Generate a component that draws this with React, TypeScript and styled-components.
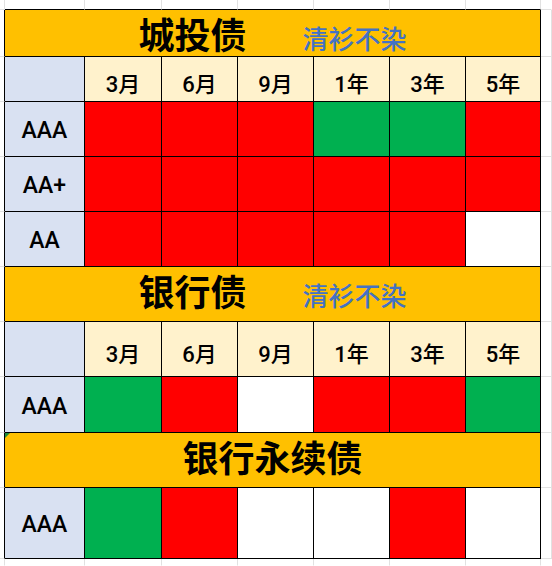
import React, { FC, ReactElement } from 'react'
import styled, { createGlobalStyle } from 'styled-components'

const GlobalStyle = createGlobalStyle`
  html, body {
    margin: 0;
    padding: 0;
    background: #ffffff;
  }
`

type Line = 'ink' | 'grid' | 'none'

const lineColor = (l?: Line) =>
    l === 'ink' ? '#000000' : l === 'grid' ? '#e1e1e1' : 'transparent'

const RED = '#ff0000'
const GREEN = '#00b050'
const WHITE = '#ffffff'

const Sheet = styled.div<{ $rows: string }>`
  display: grid;
  grid-template-columns: 5px 80px 77px 76px 76px 76px 76px 75px 1fr;
  grid-template-rows: ${props => props.$rows};
  width: 552px;
  height: 566px;
  overflow: hidden;
  font-family: Roboto, "Noto Sans CJK SC", sans-serif;
  color: #000000;
`

const Cell = styled.div<{ $fill?: string; $right?: Line; $bottom?: Line; $span?: number }>`
  box-sizing: border-box;
  position: relative;
  display: flex;
  align-items: center;
  justify-content: center;
  min-width: 0;
  background: ${props => props.$fill ?? 'transparent'};
  border-right: 1px solid ${props => lineColor(props.$right ?? 'ink')};
  border-bottom: 1px solid ${props => lineColor(props.$bottom ?? 'ink')};
  grid-column: ${props => (props.$span ? `span ${props.$span}` : 'auto')};
`

const TitleCell = styled(Cell)<{ $flag?: boolean }>`
  align-items: baseline;
  padding-top: 5px;
  background: #ffc000;

  &::before {
    content: '';
    display: ${props => (props.$flag ? 'block' : 'none')};
    position: absolute;
    left: 0;
    top: 0;
    width: 0;
    height: 0;
    border-top: 5px solid #1e8c3a;
    border-right: 5px solid transparent;
  }
`

const Title = styled.span`
  font-family: "Noto Sans CJK SC", sans-serif;
  font-size: 36px;
  font-weight: 700;
  line-height: 1;
`

const Note = styled.span`
  margin-left: 56px;
  font-family: "Noto Sans CJK SC", sans-serif;
  font-size: 26px;
  font-weight: 500;
  line-height: 1;
  color: #4472c4;
`

const Label = styled.span`
  font-size: 23px;
  font-weight: 500;
  padding-top: 3px;
`

const Term = styled.span`
  font-size: 22px;
  font-weight: 500;
  padding-top: 5px;
`

type Section = {
    title: string
    note?: string
    flag?: boolean
    head: boolean
    rows: { label: string; cells: string }[]
}

const terms = ['3月', '6月', '9月', '1年', '3年', '5年']

const sections: Section[] = [
    {
        title: '城投债',
        note: '清衫不染',
        head: true,
        rows: [
            { label: 'AAA', cells: 'RRRGGR' },
            { label: 'AA+', cells: 'RRRRRR' },
            { label: 'AA', cells: 'RRRRRW' },
        ],
    },
    {
        title: '银行债',
        note: '清衫不染',
        head: true,
        rows: [{ label: 'AAA', cells: 'GRWRRG' }],
    },
    {
        title: '银行永续债',
        flag: true,
        head: false,
        rows: [{ label: 'AAA', cells: 'GRWWRW' }],
    },
]

const fillOf = (c: string) => (c === 'R' ? RED : c === 'G' ? GREEN : WHITE)

// one sheet row = left gutter + table part + right gutter
const Gutters: FC<{ children: React.ReactNode }> = ({ children }) => (
    <>
        <Cell $right="ink" $bottom="grid" />
        {children}
        <Cell $right="grid" $bottom="grid" />
    </>
)

const App: FC = (): ReactElement => {
    const rows = '10px 47px 45px 55px 55px 55px 55px 55px 56px 55px 71px 1fr'

    return (
        <>
            <GlobalStyle />
            <Sheet $rows={rows}>
                {/* partial row above the table */}
                <Cell $right="grid" $bottom="grid" />
                {Array.from({ length: 7 }).map((_, i) => (
                    <Cell key={`top${i}`} $right="grid" $bottom="ink" />
                ))}
                <Cell $right="none" $bottom="grid" />

                {sections.map(s => (
                    <React.Fragment key={s.title}>
                        <Gutters>
                            <TitleCell $span={7} $flag={s.flag}>
                                <Title>{s.title}</Title>
                                {s.note && <Note>{s.note}</Note>}
                            </TitleCell>
                        </Gutters>
                        {s.head && (
                            <Gutters>
                                <Cell $fill="#d9e1f2" />
                                {terms.map(t => (
                                    <Cell key={t} $fill="#fff2cc">
                                        <Term>{t}</Term>
                                    </Cell>
                                ))}
                            </Gutters>
                        )}
                        {s.rows.map(r => (
                            <Gutters key={r.label}>
                                <Cell $fill="#d9e1f2">
                                    <Label>{r.label}</Label>
                                </Cell>
                                {r.cells.split('').map((c, i) => (
                                    <Cell key={i} $fill={fillOf(c)} />
                                ))}
                            </Gutters>
                        ))}
                    </React.Fragment>
                ))}

                {/* partial row below the table */}
                <Cell $right="grid" $bottom="none" />
                {Array.from({ length: 7 }).map((_, i) => (
                    <Cell key={`bot${i}`} $right="grid" $bottom="none" />
                ))}
                <Cell $right="none" $bottom="none" />
            </Sheet>
        </>
    )
}

export default App
